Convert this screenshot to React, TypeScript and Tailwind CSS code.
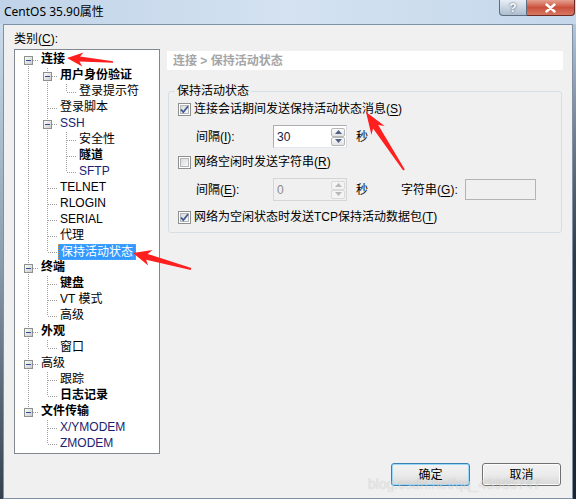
import React from "react";

type Node = { label: string; depth: number; bold?: boolean; kids?: boolean; sel?: boolean; blue?: boolean };

const tree: Node[] = [
  { label: "连接", depth: 0, bold: true, kids: true },
  { label: "用户身份验证", depth: 1, bold: true, kids: true },
  { label: "登录提示符", depth: 2 },
  { label: "登录脚本", depth: 1 },
  { label: "SSH", depth: 1, kids: true, blue: true },
  { label: "安全性", depth: 2 },
  { label: "隧道", depth: 2, bold: true },
  { label: "SFTP", depth: 2, blue: true },
  { label: "TELNET", depth: 1 },
  { label: "RLOGIN", depth: 1 },
  { label: "SERIAL", depth: 1 },
  { label: "代理", depth: 1 },
  { label: "保持活动状态", depth: 1, sel: true },
  { label: "终端", depth: 0, bold: true, kids: true },
  { label: "键盘", depth: 1, bold: true },
  { label: "VT 模式", depth: 1 },
  { label: "高级", depth: 1 },
  { label: "外观", depth: 0, bold: true, kids: true },
  { label: "窗口", depth: 1 },
  { label: "高级", depth: 0, kids: true },
  { label: "跟踪", depth: 1 },
  { label: "日志记录", depth: 1, bold: true },
  { label: "文件传输", depth: 0, bold: true, kids: true },
  { label: "X/YMODEM", depth: 1, blue: true },
  { label: "ZMODEM", depth: 1, blue: true },
];

const font = { fontFamily: '"Liberation Sans", "Noto Sans CJK SC", sans-serif' };

function hasNext(i: number) {
  const d = tree[i].depth;
  for (let j = i + 1; j < tree.length; j++) {
    if (tree[j].depth < d) return false;
    if (tree[j].depth === d) return true;
  }
  return false;
}

function ancestor(i: number, k: number) {
  for (let j = i - 1; j >= 0; j--) if (tree[j].depth === k) return j;
  return -1;
}

const LINE = "#a0a0a0";

function Cell({ up, down, across, box }: { up?: boolean; down?: boolean; across?: boolean; box?: boolean }) {
  return (
    <svg width="19" height="16" className="shrink-0" shapeRendering="crispEdges">
      <defs>
        <linearGradient id="bx" x1="0" y1="0" x2="1" y2="1">
          <stop offset="0" stopColor="#ffffff" />
          <stop offset="1" stopColor="#c8c8c8" />
        </linearGradient>
      </defs>
      {up && <line x1="8.5" y1="0" x2="8.5" y2="8" stroke={LINE} strokeDasharray="1 1" />}
      {down && <line x1="8.5" y1="8" x2="8.5" y2="16" stroke={LINE} strokeDasharray="1 1" />}
      {across && <line x1="9" y1="8.5" x2="19" y2="8.5" stroke={LINE} strokeDasharray="1 1" />}
      {box && (
        <>
          <rect x="4.5" y="4.5" width="8" height="8" fill="url(#bx)" stroke="#8e8f8f" />
          <line x1="6" y1="8.5" x2="11" y2="8.5" stroke="#2f4f8f" />
        </>
      )}
    </svg>
  );
}

function Tree() {
  return (
    <div className="h-[405px] w-[146px] border border-[#828790] bg-white pl-[5px] pt-[2px]" style={font}>
      {tree.map((n, i) => {
        const cells = [];
        for (let k = 0; k < n.depth; k++) {
          cells.push(<Cell key={k} up={hasNext(ancestor(i, k))} down={hasNext(ancestor(i, k))} />);
        }
        cells.push(<Cell key="own" up={i !== 0} down={hasNext(i)} across box={n.kids} />);
        return (
          <div key={i} className="flex h-[16px] items-center">
            {cells}
            <span
              className={
                "h-[16px] whitespace-nowrap px-[2px] text-[12px] leading-[15px] " +
                (n.bold ? "font-bold " : "") +
                (n.sel
                  ? "border border-dotted border-[#d08a3a] bg-[#3399ff] text-white"
                  : n.blue
                    ? "text-[#1a2370]"
                    : "text-black")
              }
            >
              {n.label}
            </span>
          </div>
        );
      })}
    </div>
  );
}

function Check() {
  return (
    <svg width="13" height="13" className="shrink-0" shapeRendering="crispEdges">
      <defs>
        <linearGradient id="cb" x1="0" y1="0" x2="1" y2="1">
          <stop offset="0" stopColor="#d8d8d8" />
          <stop offset="1" stopColor="#fbfbfb" />
        </linearGradient>
      </defs>
      <rect x="0.5" y="0.5" width="12" height="12" fill="#fff" stroke="#8e8f8f" />
      <rect x="2.5" y="2.5" width="8" height="8" fill="url(#cb)" stroke="#b4b6b9" />
    </svg>
  );
}

function Checked() {
  return (
    <svg width="13" height="13" className="shrink-0">
      <defs>
        <linearGradient id="cb2" x1="0" y1="0" x2="1" y2="1">
          <stop offset="0" stopColor="#d8d8d8" />
          <stop offset="1" stopColor="#fbfbfb" />
        </linearGradient>
      </defs>
      <rect x="0.5" y="0.5" width="12" height="12" fill="#fff" stroke="#8e8f8f" shapeRendering="crispEdges" />
      <rect x="2.5" y="2.5" width="8" height="8" fill="url(#cb2)" stroke="#b4b6b9" shapeRendering="crispEdges" />
      <path d="M3 6.5 L5.3 9.2 L10 3.2" fill="none" stroke="#3d5a93" strokeWidth="1.8" />
    </svg>
  );
}

function U({ c }: { c: string }) {
  return (
    <>
      (<span className="underline underline-offset-2">{c}</span>)
    </>
  );
}

function Spin({ value, disabled }: { value: string; disabled?: boolean }) {
  const arrow = disabled ? "#b8b8b8" : "#4d6185";
  return (
    <div
      className={
        "flex h-[23px] w-[74px] items-center justify-between border pl-[3px] pr-[1px] " +
        (disabled ? "border-[#d5d5d5] bg-[#f0f0f0] text-[#8a8a8a]" : "border-[#abadb3] border-r-[#dbdfe6] border-b-[#e3e9ef] bg-white text-[#1a1a40]")
      }
    >
      <span className="text-[12px]">{value}</span>
      <div className="flex flex-col gap-0">
        {[0, 1].map((k) => (
          <div
            key={k}
            className={
              "flex h-[9px] w-[14px] items-center justify-center rounded-[2px] border " +
              (disabled ? "border-[#dadada] bg-[#f4f4f4]" : "border-[#b8b8b8] bg-linear-to-b from-[#fbfbfb] to-[#e3e3e3]")
            }
          >
            <svg width="7" height="4">
              <path d={k === 0 ? "M0 4 L3.5 0 L7 4 Z" : "M0 0 L3.5 4 L7 0 Z"} fill={arrow} />
            </svg>
          </div>
        ))}
      </div>
    </div>
  );
}

function arrowPts(tip: [number, number], tail: [number, number], hl: number, hw: number, sh: number, st: number) {
  const dx = tail[0] - tip[0];
  const dy = tail[1] - tip[1];
  const len = Math.hypot(dx, dy);
  const ux = dx / len;
  const uy = dy / len;
  const nx = -uy;
  const ny = ux;
  const bx = tip[0] + ux * hl;
  const by = tip[1] + uy * hl;
  const bbx = tip[0] + ux * (hl * 0.8);
  const bby = tip[1] + uy * (hl * 0.8);
  const p = [
    [tip[0], tip[1]],
    [bx + nx * hw, by + ny * hw],
    [bbx + nx * (sh / 2), bby + ny * (sh / 2)],
    [tail[0] + nx * (st / 2), tail[1] + ny * (st / 2)],
    [tail[0] - nx * (st / 2), tail[1] - ny * (st / 2)],
    [bbx - nx * (sh / 2), bby - ny * (sh / 2)],
    [bx - nx * hw, by - ny * hw],
  ];
  return p.map((q) => q[0].toFixed(1) + "," + q[1].toFixed(1)).join(" ");
}

function Btn({ label, primary }: { label: string; primary?: boolean }) {
  return (
    <button
      className={
        "h-[23px] w-[79px] rounded-[3px] border bg-linear-to-b from-[#f3f3f3] via-[#ebebeb] to-[#d8d8d8] text-[12px] text-black " +
        (primary ? "border-[#3c7fb1] shadow-[inset_0_0_0_1px_#97d8fb]" : "border-[#707070] shadow-[inset_0_0_0_1px_#fcfcfc]")
      }
    >
      {label}
    </button>
  );
}

export default function App() {
  return (
    <div className="relative h-[499px] w-[576px] overflow-hidden bg-[#c8d9ec]" style={font}>
      {/* 标题栏 */}
      <div className="flex h-[24px] items-start bg-linear-to-r from-[#c0d3e8] via-[#d4e2f1] to-[#c4d7eb]">
        <span className="pl-[4px] pt-[4px] text-[12px] leading-[15px] text-black" style={{ fontFamily: '"Noto Sans", "Noto Sans CJK SC", sans-serif' }}>
          CentOS 35.90属性
        </span>
        <div className="ml-auto mr-[1px] flex h-[16px]">
          <div className="flex w-[28px] items-center justify-center rounded-bl-[4px] border border-t-0 border-[#5d6e83] bg-linear-to-b from-[#e8eef5] via-[#c9d5e2] to-[#aebccd] text-[12px] font-bold leading-none text-white [text-shadow:0_0_2px_#334]">
            ?
          </div>
          <div className="flex w-[48px] items-center justify-center rounded-br-[4px] border border-l-0 border-t-0 border-[#6b2a24] bg-linear-to-b from-[#e4a08f] via-[#c9503c] to-[#d87762]">
            <svg width="11" height="10">
              <path d="M1.5 1.5 L9.5 8.5 M9.5 1.5 L1.5 8.5" stroke="#fff" strokeWidth="2.4" strokeLinecap="round" />
            </svg>
          </div>
        </div>
      </div>

      <div className="flex h-[475px]">
        <div className="w-[3px] bg-linear-to-b from-[#cadbee] via-[#8c9db0] to-[#34424f]" />
        {/* 主面板 */}
        <div className="flex w-[570px] flex-col border border-[#7f91a6] bg-[#f0f0f0]">
          <div className="flex pl-[10px] pt-[6px]">
            <div className="flex flex-col">
              <div className="h-[18px] text-[12px] leading-[16px] text-black">
                类别<U c="C" />:
              </div>
              <Tree />
            </div>

            <div className="ml-[7px] mt-[20px] w-[396px]">
              <div className="h-[19px] bg-white pl-[6px] text-[12px] font-bold leading-[20px] text-[#a5a5a5]">
                连接 &gt; 保持活动状态
              </div>

              <div className="relative ml-[1px] mt-[21px] w-[394px] rounded-[3px] border border-[#d5dfe5] pb-[7px] pl-[9px] pt-[9px] text-[12px] text-black">
                <span className="absolute -top-[9px] left-[6px] bg-[#f0f0f0] px-[2px] leading-[16px]">保持活动状态</span>

                <div className="flex h-[16px] items-center gap-[3px]">
                  <Checked />
                  <span>
                    连接会话期间发送保持活动状态消息<U c="S" />
                  </span>
                </div>

                <div className="mt-[8px] flex h-[23px] items-center pl-[18px]">
                  <span className="w-[77px]">
                    间隔<U c="I" />:
                  </span>
                  <Spin value="30" />
                  <span className="ml-[9px]">秒</span>
                </div>

                <div className="mt-[6px] flex h-[16px] items-center gap-[3px]">
                  <Check />
                  <span>
                    网络空闲时发送字符串<U c="R" />
                  </span>
                </div>

                <div className="mt-[8px] flex h-[23px] items-center pl-[18px]">
                  <span className="w-[77px]">
                    间隔<U c="E" />:
                  </span>
                  <Spin value="0" disabled />
                  <span className="ml-[9px]">秒</span>
                  <span className="ml-[33px] w-[64px]">
                    字符串<U c="G" />:
                  </span>
                  <div className="h-[21px] w-[71px] border border-[#b4b4b4] bg-[#f0f0f0]" />
                </div>

                <div className="mt-[8px] flex h-[16px] items-center gap-[3px]">
                  <Checked />
                  <span>
                    网络为空闲状态时发送TCP保持活动数据包<U c="T" />
                  </span>
                </div>
              </div>
            </div>
          </div>

          <div className="mt-[9px] flex justify-end gap-[12px] pr-[11px]">
            <Btn label="确定" primary />
            <Btn label="取消" />
          </div>
        </div>
        <div className="w-[3px] bg-linear-to-b from-[#b4c6da] via-[#2c3844] to-[#1d252d]" />
      </div>

      {/* 水印 */}
      <div className="pointer-events-none absolute left-[368px] top-[474px] whitespace-nowrap text-[14px] text-white/50 [text-shadow:0_0_1px_rgba(0,0,0,0.2)]">
        blog.csdn.net/qq_43985747
      </div>

      {/* 标注箭头 */}
      <svg className="pointer-events-none absolute left-0 top-0" width="576" height="499">
        <polygon points={arrowPts([67, 58], [113, 62], 16, 7, 5, 1.5)} fill="#ff1f1f" />
        <polygon points={arrowPts([133, 253], [191, 269], 18, 8, 6, 2)} fill="#ff1f1f" />
        <polygon points={arrowPts([366, 112], [404, 170], 22, 8, 6, 2)} fill="#ff1f1f" />
      </svg>
    </div>
  );
}
